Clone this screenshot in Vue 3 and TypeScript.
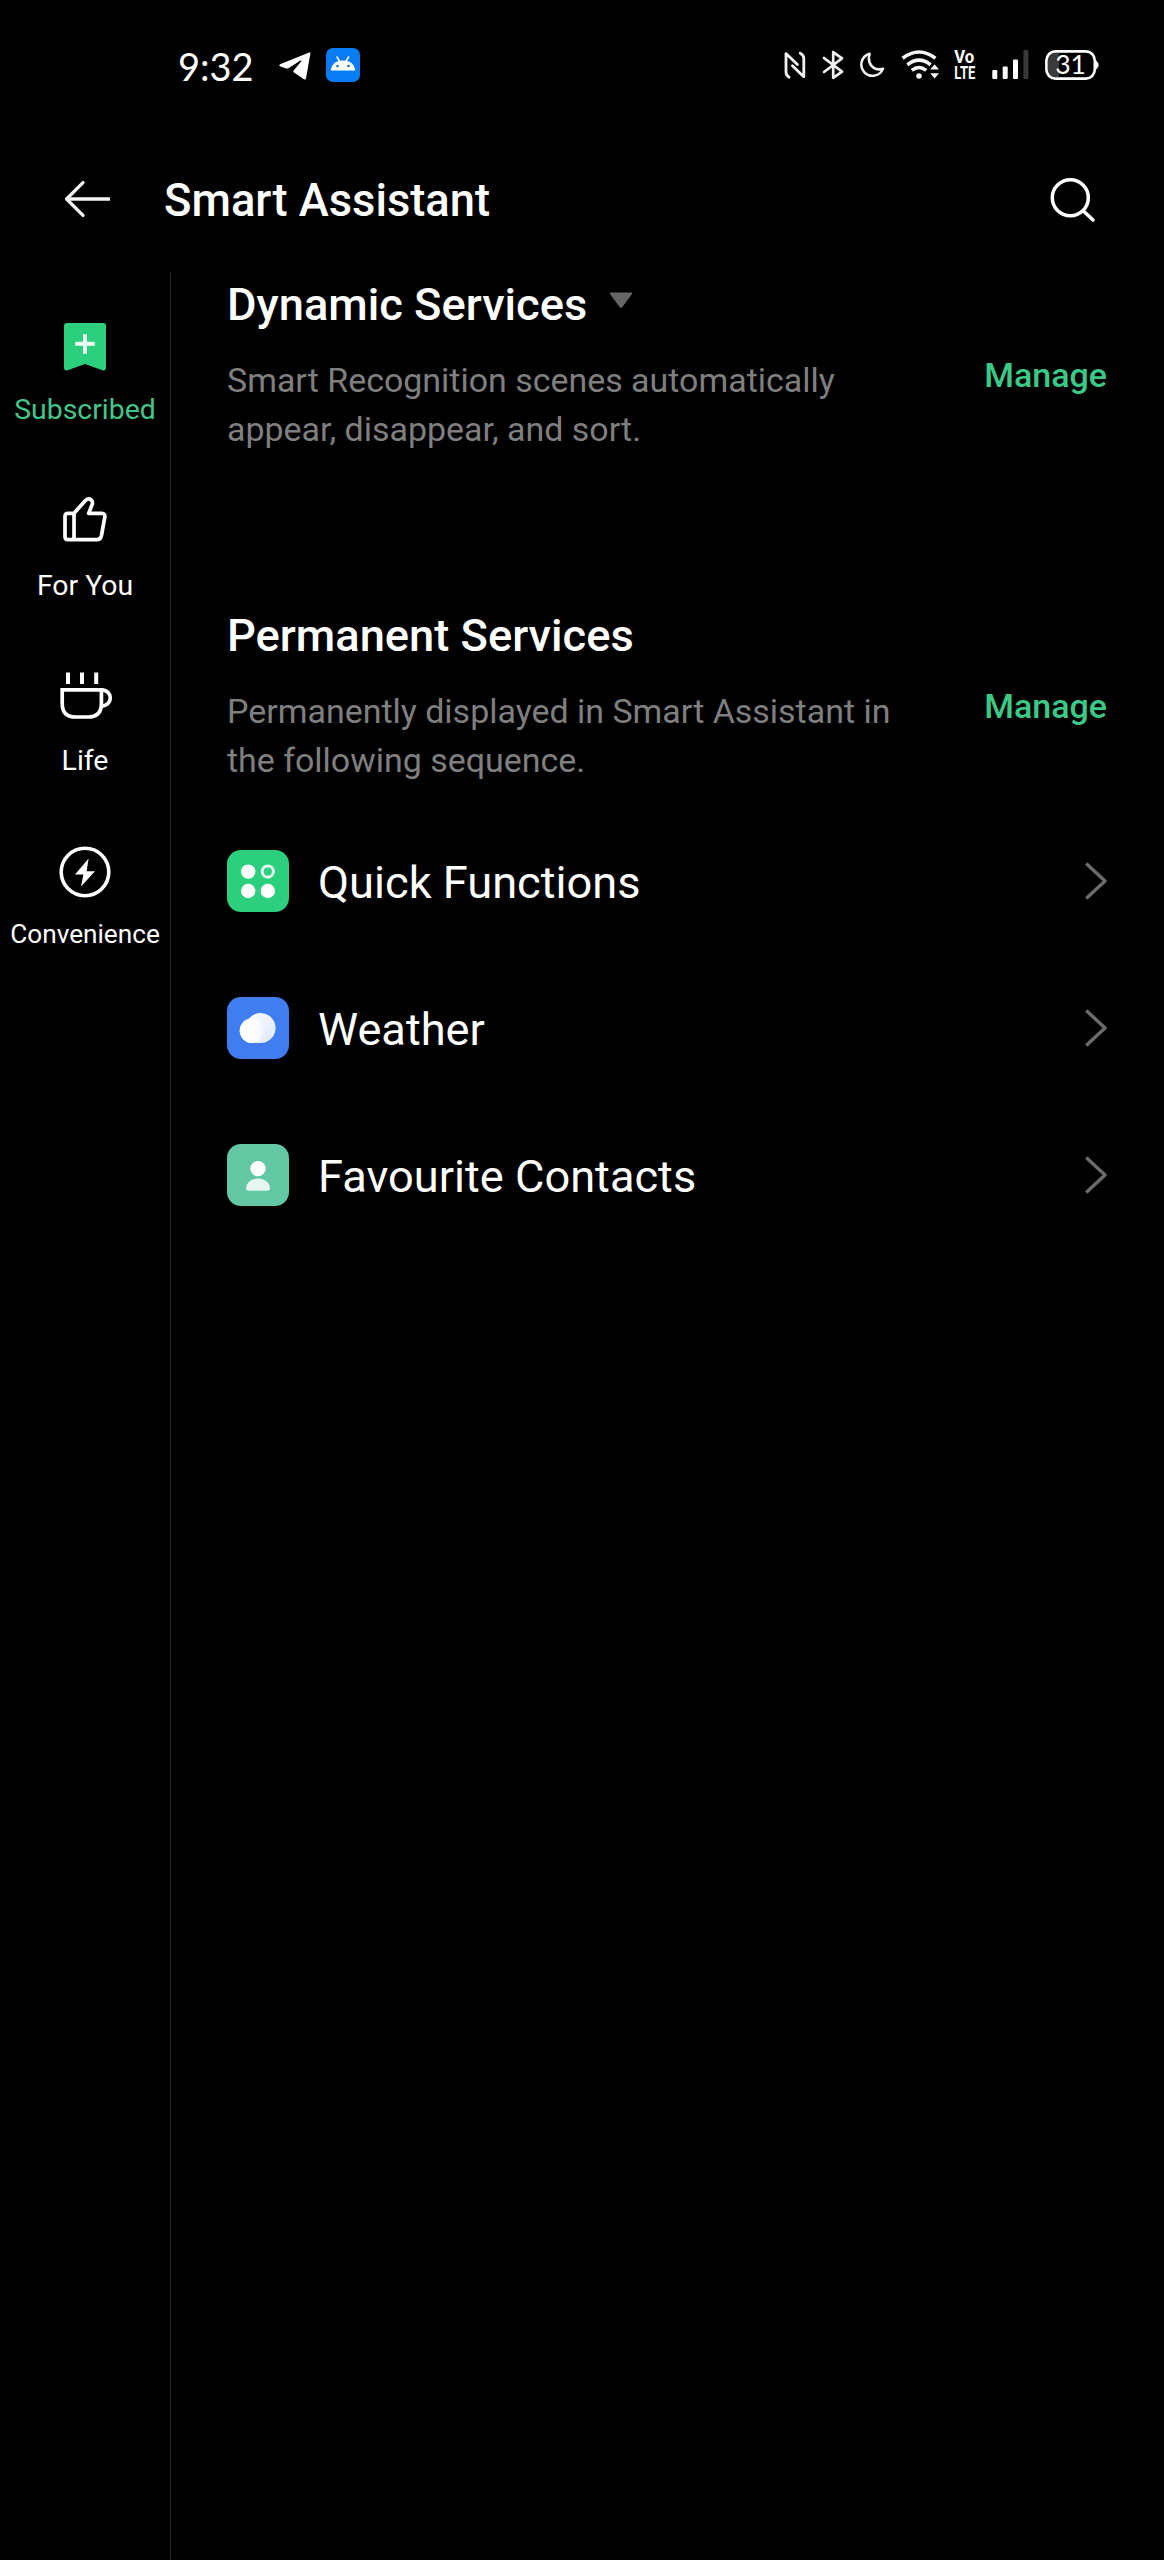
<script setup lang="ts">
interface NavItem {
  id: string
  label: string
  active?: boolean
}

interface ServiceItem {
  id: string
  label: string
}

const navItems: NavItem[] = [
  { id: 'subscribed', label: 'Subscribed', active: true },
  { id: 'foryou', label: 'For You' },
  { id: 'life', label: 'Life' },
  { id: 'convenience', label: 'Convenience' },
]

const services: ServiceItem[] = [
  { id: 'quick', label: 'Quick Functions' },
  { id: 'weather', label: 'Weather' },
  { id: 'contacts', label: 'Favourite Contacts' },
]
</script>

<template>
  <div class="screen">
    <div class="status">
      <div class="status-left">
        <span class="time">9:32</span>
        <svg class="telegram" width="34" height="34" viewBox="0 0 34 34">
          <path d="M31.2 4.4Q32.6 4 32.4 5.6L28 30.6Q27.5 32.2 26 31.3L15.6 24.3Q14.8 23.6 15.6 22.6L23.5 13Q23.6 12 22.4 12.6L10.5 20.2Q9.3 20.8 8 20.4L2 18.2Q0.2 17.2 2 16.2Z" fill="#fff" />
        </svg>
        <svg width="34" height="34" viewBox="0 0 34 34">
          <rect width="34" height="34" rx="7" fill="#0a7cf3" />
          <path d="M4.8 22.6C5.4 16.5 9.5 12.4 17 12.4S28.6 16.5 29.2 22.6Z" fill="#fff" />
          <path d="M11 9l3 5M22.6 9l-3 5" stroke="#fff" stroke-width="1.5" stroke-linecap="round" />
          <circle cx="11.5" cy="18" r="1.3" fill="#0a6fd8" />
          <circle cx="22.5" cy="18" r="1.3" fill="#0a6fd8" />
        </svg>
      </div>
      <div class="status-right">
        <svg class="nfc" width="22" height="30" viewBox="0 0 22 30" fill="none" stroke="#f2f2f2" stroke-width="2.8" stroke-linejoin="round" stroke-linecap="round">
          <path d="M5.2 27.2C2.6 25.8 2 24.4 2 22V3.6L13.4 14.6" />
          <path d="M16.2 3.2C19 4.6 19.8 6 19.8 8.4V26.8L8.4 15.8" />
        </svg>
        <svg class="bt" width="22" height="30" viewBox="0 0 22 30" fill="none" stroke="#f2f2f2" stroke-width="2.7" stroke-linejoin="round" stroke-linecap="round">
          <path d="M2 8L20 21.6L11.2 27.8V2.2L20 8.4L2 22" />
        </svg>
        <svg class="moon" width="26" height="26" viewBox="0 0 26 26" fill="none" stroke="#f2f2f2" stroke-width="2.5" stroke-linejoin="round">
          <path d="M10.6 1.8A11.2 11.2 0 1 0 24 16.6C15.4 19.6 7.6 12.6 10.6 1.8Z" />
        </svg>
        <svg class="wifi" width="40" height="32" viewBox="0 0 40 32" fill="none" stroke="#f6f6f6">
          <path d="M1.6 9.2Q18 -3.2 34.4 9.2" stroke-width="3.6" />
          <path d="M6.4 15.8Q18 6.6 29.6 15.8" stroke-width="3.6" />
          <path d="M10.8 21.4Q18 15.4 25.2 21.4" stroke-width="3.4" />
          <circle cx="18" cy="27" r="2.8" fill="#f6f6f6" stroke="none" />
          <path d="M33.6 15.2L38 20.6H29.2ZM33.6 29.6L38 24.2H29.2Z" fill="#f6f6f6" stroke="none" />
          <circle cx="33.6" cy="22.4" r="1.5" fill="#000" stroke="none" />
        </svg>
        <svg class="volte" width="32" height="44" viewBox="-1 -7 32 44">
          <text>
            <tspan x="0.3" y="13.4" textLength="20" lengthAdjust="spacingAndGlyphs">Vo</tspan>
            <tspan x="0.3" y="29" textLength="21" lengthAdjust="spacingAndGlyphs">LTE</tspan>
          </text>
        </svg>
        <svg class="signal" width="37" height="29" viewBox="0 0 37 29" fill="#fff">
          <rect x="0.3" y="20" width="5" height="9" rx="1" />
          <rect x="10.7" y="16.6" width="5" height="12.4" rx="1" />
          <rect x="21" y="9.6" width="5" height="19.4" rx="1" />
          <rect x="31.4" y="0" width="5" height="29" rx="1" fill="#383838" />
        </svg>
        <svg class="battery" width="54" height="44" viewBox="0 -7 54 44">
          <path d="M10 3H14V27H10Q3 27 3 20V10Q3 3 10 3Z" fill="#3a3a3a" />
          <rect x="1.4" y="1.4" width="48.4" height="27.2" rx="9" fill="none" stroke="#fff" stroke-width="2.6" />
          <path d="M50 10Q53.6 12 53.6 15T50 20Z" fill="#fff" />
          <text x="25.5" y="24.4" text-anchor="middle">31</text>
        </svg>
      </div>
    </div>

    <header class="header">
      <svg width="50" height="40" viewBox="0 0 50 40" fill="none" stroke="#f5f5f5" stroke-width="3.3" stroke-linecap="round" stroke-linejoin="round">
        <path d="M20 3.6L3.6 20L20 36.4" />
        <path d="M4 20H47" stroke-linecap="butt" />
      </svg>
      <h1>Smart Assistant</h1>
      <svg class="search" width="48" height="48" viewBox="0 0 48 48" fill="none" stroke="#fff" stroke-width="3.5" stroke-linecap="round">
        <circle cx="21.3" cy="21.7" r="18" />
        <path d="M34.4 35L44 44" />
      </svg>
    </header>

    <div class="body">
      <nav class="sidebar">
        <div v-for="item in navItems" :key="item.id" class="nav-item" :class="[item.id, { active: item.active }]">
          <svg v-if="item.id === 'subscribed'" width="56" height="56" viewBox="0 0 56 56">
            <path d="M10 4H46Q49 4 49 7V48.4Q49 52.2 45.4 51.2L28 45L10.6 51.2Q7 52.2 7 48.4V7Q7 4 10 4Z" fill="#2bcf7d" />
            <path d="M28 15.2V34.8M18.2 24.7H37.8" stroke="#f0fff6" stroke-width="4" />
          </svg>
          <svg v-else-if="item.id === 'foryou'" width="56" height="56" viewBox="0 0 56 56" fill="none" stroke="#fff" stroke-width="3.7" stroke-linejoin="round">
            <path d="M11 19.4H16.8L28.2 6.8C32.2 2.8 36.8 6.2 35 11L31.6 19.4H44.8Q48.4 19.4 47.8 23.2L44.4 41.8Q43.6 45.6 39.8 45.6H11Q8 45.6 8 42.4V22.6Q8 19.4 11 19.4Z" />
            <path d="M17 19.4V45.6" />
          </svg>
          <svg v-else-if="item.id === 'life'" width="56" height="56" viewBox="0 0 56 56" fill="none" stroke="#fff" stroke-width="3.7">
            <path d="M11 3.6V15M25 3.6V15M39.2 3.6V15" stroke-width="4" />
            <path d="M5.2 20.8H44.4V34.4Q44.4 48 30.8 48H18.8Q5.2 48 5.2 34.4Z" />
            <path d="M44 20.8C56.4 20.8 56.4 36.8 44 37.2" />
          </svg>
          <svg v-else width="56" height="56" viewBox="0 0 56 56">
            <circle cx="28" cy="28" r="23.8" fill="none" stroke="#fff" stroke-width="3.6" />
            <path d="M31.6 14.4L18 30.6H26.4L24 42.6L38 27.2H29.6Z" fill="#fff" />
          </svg>
          <span>{{ item.label }}</span>
        </div>
      </nav>

      <main class="content">
        <section class="block">
          <div class="title-row">
            <h2>Dynamic Services</h2>
            <svg class="caret" width="24" height="17" viewBox="0 0 24 17">
              <path d="M1.6 0.5H22.4Q24 0.7 23 2L13.2 15.2Q12 16.6 10.8 15.2L1 2Q0 0.7 1.6 0.5Z" fill="#666" />
            </svg>
          </div>
          <div class="desc-row">
            <p>Smart Recognition scenes automatically<br />appear, disappear, and sort.</p>
            <a>Manage</a>
          </div>
        </section>

        <section class="block">
          <div class="title-row">
            <h2>Permanent Services</h2>
          </div>
          <div class="desc-row">
            <p>Permanently displayed in Smart Assistant in<br />the following sequence.</p>
            <a>Manage</a>
          </div>
        </section>

        <ul class="list">
          <li v-for="s in services" :key="s.id">
            <svg v-if="s.id === 'quick'" width="62" height="62" viewBox="0 0 62 62">
              <rect width="62" height="62" rx="14" fill="#2bcf7d" />
              <circle cx="21.2" cy="21.6" r="7.2" fill="#fff" />
              <circle cx="21.2" cy="41" r="7.2" fill="#fff" />
              <circle cx="40.8" cy="41" r="7.2" fill="#fff" />
              <circle cx="40.8" cy="21.6" r="5.6" fill="none" stroke="#e2faed" stroke-width="3" />
            </svg>
            <svg v-else-if="s.id === 'weather'" width="62" height="62" viewBox="0 0 62 62">
              <defs>
                <linearGradient id="cloud-back" x1="0" y1="0" x2="1" y2="1">
                  <stop offset="0.2" stop-color="#f6f9ff" />
                  <stop offset="1" stop-color="#dfe7fb" />
                </linearGradient>
                <linearGradient id="cloud-front" x1="0" y1="0" x2="1" y2="0">
                  <stop offset="0.5" stop-color="#fff" />
                  <stop offset="1" stop-color="#fff" stop-opacity="0.3" />
                </linearGradient>
              </defs>
              <rect width="62" height="62" rx="14" fill="#3f7df0" />
              <path d="M25 46A12.4 12.4 0 0 1 22 21.6A15 15 0 1 1 35 46Z" fill="url(#cloud-back)" />
              <circle cx="25" cy="33.7" r="12.3" fill="url(#cloud-front)" />
            </svg>
            <svg v-else width="62" height="62" viewBox="0 0 62 62">
              <rect width="62" height="62" rx="14" fill="#63c7a4" />
              <circle cx="31" cy="24.6" r="7.7" fill="#fff" />
              <path d="M19 44C19.4 38.6 24.4 34.6 31 34.6S42.6 38.6 43 44Q43 46.8 40.4 46.8H21.6Q19 46.8 19 44Z" fill="#e6f6f0" />
            </svg>
            <span class="name">{{ s.label }}</span>
            <svg class="chev" width="24" height="40" viewBox="0 0 24 40" fill="none" stroke="#6b6b6b" stroke-width="3.4" stroke-linejoin="round">
              <path d="M3.2 2.4L22 20L3.2 37.6" />
            </svg>
          </li>
        </ul>
      </main>
    </div>
  </div>
</template>

<style>
html,
body {
  margin: 0;
  background: #000;
}
</style>

<style scoped>
.screen {
  width: 1164px;
  height: 2560px;
  background: #000;
  color: #fff;
  font-family: Roboto, sans-serif;
  overflow: hidden;
  display: flex;
  flex-direction: column;
}
svg {
  display: block;
  flex: none;
}
.status {
  height: 130px;
  flex: none;
  box-sizing: border-box;
  padding: 0 65px 0 178px;
  display: flex;
  justify-content: space-between;
}
.status-left,
.status-right {
  display: flex;
  height: 129px;
  align-items: center;
}
.time {
  width: 100px;
  font-family: Lato, sans-serif;
  font-size: 38px;
  line-height: 50px;
  margin-top: 3px;
}
.telegram {
  margin-right: 14px;
}
.nfc { margin-right: 16px; }
.bt { margin-right: 15px; }
.moon { margin-right: 16px; }
.wifi { margin-right: 12px; }
.volte { margin-right: 7px; }
.signal { margin-right: 16px; }
.volte text {
  font: 700 17.5px Roboto, sans-serif;
  fill: #fff;
}
.battery text {
  font: 400 26.5px Lato, sans-serif;
  fill: #fff;
}
.header {
  height: 142px;
  flex: none;
  box-sizing: border-box;
  padding: 0 67px 4px 63px;
  display: flex;
  align-items: center;
}
h1,
h2,
p,
ul {
  margin: 0;
  padding: 0;
}
h1 {
  margin-left: 51px;
  padding-top: 4px;
  font-size: 45.3px;
  line-height: 54px;
  font-weight: 500;
  flex: 1;
}
.search {
  margin-top: 2px;
}
.body {
  flex: 1;
  display: flex;
}
.sidebar {
  width: 170px;
  border-right: 1px solid #262626;
}
.nav-item {
  height: 175px;
  box-sizing: border-box;
  display: flex;
  flex-direction: column;
  align-items: center;
  padding-top: 47px;
}
.nav-item span {
  margin-top: 17px;
  font-size: 28.4px;
  line-height: 36px;
  white-space: nowrap;
}
.nav-item.foryou span,
.nav-item.life span {
  margin-top: 18px;
}
.active span {
  color: #45c58a;
}
.nav-item.convenience span {
  margin-top: 16px;
  font-size: 26.2px;
}
.content {
  flex: 1;
  padding: 6px 57px 0 56px;
}
.block {
  height: 331px;
}
.title-row {
  display: flex;
  height: 78px;
}
h2 {
  font-size: 45.25px;
  line-height: 54px;
  font-weight: 500;
}
.caret {
  margin: 14px 0 0 22px;
}
.desc-row {
  display: flex;
  justify-content: space-between;
}
p {
  padding-top: 1px;
  font-size: 33.95px;
  line-height: 48.5px;
  color: #7f7f7f;
  white-space: nowrap;
}
a {
  margin-top: -1px;
  font-size: 34px;
  line-height: 40px;
  font-weight: 500;
  color: #3cc987;
}
.list {
  list-style: none;
  margin-top: -133px;
}
.list li {
  height: 147px;
  display: flex;
  align-items: center;
}
.name {
  flex: 1;
  margin-left: 29px;
  font-size: 45.2px;
  line-height: 54px;
  padding-top: 5px;
}
</style>
